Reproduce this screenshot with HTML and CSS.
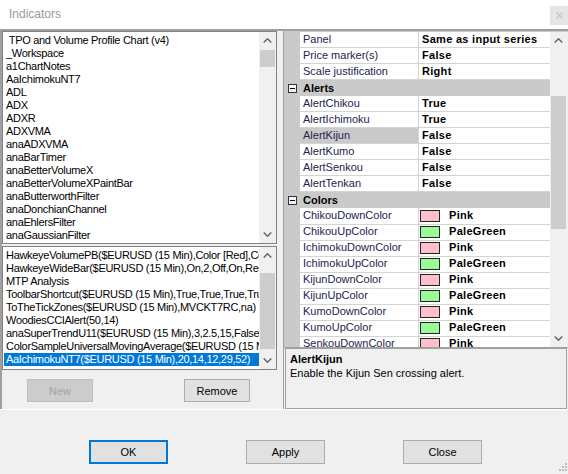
FILE: index.html
```html
<!DOCTYPE html>
<html>
<head>
<meta charset="utf-8">
<link rel="stylesheet" href="styles.css">
</head>
<body>
<div class="titlebar">
  <span class="title">Indicators</span>
  <span class="close"><svg width="7" height="7" viewBox="0 0 7 7"><path d="M0.5 0.5L6.5 6.5M6.5 0.5L0.5 6.5" stroke="#c4c4c4" stroke-width="1.2" fill="none"/></svg></span>
</div>
<div class="main">
  <div class="left">
    <div class="list list-top">
      <div class="items">
        <div class="item">&nbsp;TPO and Volume Profile Chart (v4)</div>
        <div class="item">_Workspace</div>
        <div class="item">a1ChartNotes</div>
        <div class="item">AaIchimokuNT7</div>
        <div class="item">ADL</div>
        <div class="item">ADX</div>
        <div class="item">ADXR</div>
        <div class="item">ADXVMA</div>
        <div class="item">anaADXVMA</div>
        <div class="item">anaBarTimer</div>
        <div class="item">anaBetterVolumeX</div>
        <div class="item">anaBetterVolumeXPaintBar</div>
        <div class="item">anaButterworthFilter</div>
        <div class="item">anaDonchianChannel</div>
        <div class="item">anaEhlersFilter</div>
        <div class="item">anaGaussianFilter</div>
      </div>
      <div class="vscroll">
        <div class="arrow"><svg width="9" height="5" viewBox="0 0 9 5"><polyline points="0.7,4.5 4.5,0.8 8.3,4.5" stroke="#606060" stroke-width="1.4" fill="none"/></svg></div>
        <div class="track"><div class="thumb thumb-top"></div></div>
        <div class="arrow"><svg width="9" height="5" viewBox="0 0 9 5"><polyline points="0.7,0.5 4.5,4.2 8.3,0.5" stroke="#606060" stroke-width="1.4" fill="none"/></svg></div>
      </div>
    </div>
    <div class="list list-bottom">
      <div class="items">
        <div class="item">HawkeyeVolumePB($EURUSD (15 Min),Color [Red],Color [Lime])</div>
        <div class="item">HawkeyeWideBar($EURUSD (15 Min),On,2,Off,On,Red)</div>
        <div class="item">MTP Analysis</div>
        <div class="item">ToolbarShortcut($EURUSD (15 Min),True,True,True,True)</div>
        <div class="item">ToTheTickZones($EURUSD (15 Min),MVCKT7RC,na)</div>
        <div class="item">WoodiesCCIAlert(50,14)</div>
        <div class="item">anaSuperTrendU11($EURUSD (15 Min),3,2.5,15,False)</div>
        <div class="item">ColorSampleUniversalMovingAverage($EURUSD (15 Min))</div>
        <div class="item sel">AaIchimokuNT7($EURUSD (15 Min),20,14,12,29,52)</div>
      </div>
      <div class="vscroll">
        <div class="arrow"><svg width="9" height="5" viewBox="0 0 9 5"><polyline points="0.7,4.5 4.5,0.8 8.3,4.5" stroke="#606060" stroke-width="1.4" fill="none"/></svg></div>
        <div class="track"><div class="thumb thumb-bottom"></div></div>
        <div class="arrow"><svg width="9" height="5" viewBox="0 0 9 5"><polyline points="0.7,0.5 4.5,4.2 8.3,0.5" stroke="#606060" stroke-width="1.4" fill="none"/></svg></div>
      </div>
    </div>
    <div class="list-buttons">
      <button class="btn disabled">New</button>
      <button class="btn remove">Remove</button>
    </div>
  </div>
  <div class="right">
    <div class="grid">
      <div class="rows">
        <div class="row"><div class="gutter"></div><div class="name">Panel</div><div class="value">Same as input series</div></div>
        <div class="row"><div class="gutter"></div><div class="name">Price marker(s)</div><div class="value">False</div></div>
        <div class="row"><div class="gutter"></div><div class="name">Scale justification</div><div class="value">Right</div></div>
        <div class="row cat"><div class="gutter"><span class="minus"></span></div><div class="label">Alerts</div></div>
        <div class="row"><div class="gutter"></div><div class="name">AlertChikou</div><div class="value">True</div></div>
        <div class="row"><div class="gutter"></div><div class="name">AlertIchimoku</div><div class="value">True</div></div>
        <div class="row selected"><div class="gutter"></div><div class="name">AlertKijun</div><div class="value">False</div></div>
        <div class="row"><div class="gutter"></div><div class="name">AlertKumo</div><div class="value">False</div></div>
        <div class="row"><div class="gutter"></div><div class="name">AlertSenkou</div><div class="value">False</div></div>
        <div class="row"><div class="gutter"></div><div class="name">AlertTenkan</div><div class="value">False</div></div>
        <div class="row cat"><div class="gutter"><span class="minus"></span></div><div class="label">Colors</div></div>
        <div class="row"><div class="gutter"></div><div class="name">ChikouDownColor</div><div class="value color"><span class="swatch pink"></span>Pink</div></div>
        <div class="row"><div class="gutter"></div><div class="name">ChikouUpColor</div><div class="value color"><span class="swatch green"></span>PaleGreen</div></div>
        <div class="row"><div class="gutter"></div><div class="name">IchimokuDownColor</div><div class="value color"><span class="swatch pink"></span>Pink</div></div>
        <div class="row"><div class="gutter"></div><div class="name">IchimokuUpColor</div><div class="value color"><span class="swatch green"></span>PaleGreen</div></div>
        <div class="row"><div class="gutter"></div><div class="name">KijunDownColor</div><div class="value color"><span class="swatch pink"></span>Pink</div></div>
        <div class="row"><div class="gutter"></div><div class="name">KijunUpColor</div><div class="value color"><span class="swatch green"></span>PaleGreen</div></div>
        <div class="row"><div class="gutter"></div><div class="name">KumoDownColor</div><div class="value color"><span class="swatch pink"></span>Pink</div></div>
        <div class="row"><div class="gutter"></div><div class="name">KumoUpColor</div><div class="value color"><span class="swatch green"></span>PaleGreen</div></div>
        <div class="row"><div class="gutter"></div><div class="name">SenkouDownColor</div><div class="value color"><span class="swatch pink"></span>Pink</div></div>
      </div>
      <div class="vscroll grid-scroll">
        <div class="arrow"><svg width="9" height="5" viewBox="0 0 9 5"><polyline points="0.7,4.5 4.5,0.8 8.3,4.5" stroke="#606060" stroke-width="1.4" fill="none"/></svg></div>
        <div class="track"><div class="thumb thumb-grid"></div></div>
        <div class="arrow"><svg width="9" height="5" viewBox="0 0 9 5"><polyline points="0.7,0.5 4.5,4.2 8.3,0.5" stroke="#606060" stroke-width="1.4" fill="none"/></svg></div>
      </div>
    </div>
    <div class="desc">
      <div class="desc-title">AlertKijun</div>
      <div class="desc-text">Enable the Kijun Sen crossing alert.</div>
    </div>
  </div>
</div>
<div class="footer">
  <button class="fbtn default">OK</button>
  <button class="fbtn">Apply</button>
  <button class="fbtn">Close</button>
</div>
<svg class="grip" width="10" height="10" viewBox="0 0 10 10">
  <rect x="8" y="0" width="2" height="2" fill="#bcbcbc"/>
  <rect x="5" y="3" width="2" height="2" fill="#bcbcbc"/>
  <rect x="8" y="3" width="2" height="2" fill="#bcbcbc"/>
  <rect x="2" y="6" width="2" height="2" fill="#bcbcbc"/>
  <rect x="5" y="6" width="2" height="2" fill="#bcbcbc"/>
  <rect x="8" y="6" width="2" height="2" fill="#bcbcbc"/>
</svg>
</body>
</html>
```
FILE: styles.css
```css
* { box-sizing: border-box; }
html, body { margin: 0; padding: 0; }
body {
  width: 568px;
  height: 474px;
  overflow: hidden;
  position: relative;
  background: #f0f0f0;
  font-family: "Liberation Sans", Arial, sans-serif;
  font-size: 11px;
  color: #000;
}

.titlebar {
  height: 29px;
  background: #fff;
  display: flex;
  justify-content: space-between;
  align-items: flex-start;
}
.title {
  padding-left: 9px;
  line-height: 28px;
  font-size: 12px;
  color: #9a9a9a;
}
.close {
  margin-top: 6px;
  width: 18px;
  height: 19px;
  background: #e5e5e5;
  display: flex;
  align-items: center;
  justify-content: center;
}

.main {
  display: flex;
  height: 381px;
  border-top: 2px solid #a0a0a0;
  border-bottom: 1px solid #fff;
}

.left {
  width: 280px;
  border-left: 2px solid #a0a0a0;
  display: flex;
  flex-direction: column;
}
.list {
  width: 275px;
  background: #fff;
  border: 1px solid #828282;
  display: flex;
}
.list-top { height: 213px; }
.list-bottom { height: 124px; margin-top: 2px; }
.items {
  flex: 1;
  min-width: 0;
  padding: 2px 0 0 1px;
  overflow: hidden;
}
.item {
  height: 13px;
  line-height: 13px;
  padding-left: 2px;
  white-space: nowrap;
  overflow: hidden;
  letter-spacing: -0.3px;
}
.item.sel { background: #0078d7; color: #fff; }

.vscroll {
  width: 17px;
  flex: none;
  background: #f0f0f0;
  display: flex;
  flex-direction: column;
}
.arrow {
  height: 17px;
  display: flex;
  align-items: center;
  justify-content: center;
}
.track { flex: 1; }
.thumb { background: #cdcdcd; margin: 0 1px; }
.thumb-top { margin-top: 1px; height: 17px; }
.thumb-bottom { margin-top: 9px; height: 76px; }
.thumb-grid { margin-top: 47px; height: 133px; }

.list-buttons {
  display: flex;
  margin-top: 9px;
  padding-left: 25px;
}
.btn {
  width: 66px;
  height: 23px;
  padding: 0;
  background: #e1e1e1;
  border: 1px solid #adadad;
  font-family: "Liberation Sans", Arial, sans-serif;
  font-size: 11px;
  color: #000;
}
.btn.disabled { background: #cccccc; border-color: #bfbfbf; color: #a3a3a3; }
.btn.remove { margin-left: 91px; }

.right {
  margin-left: 3px;
  width: 285px;
  border-left: 1px solid #a0a0a0;
  display: flex;
  flex-direction: column;
}
.grid {
  height: 317px;
  display: flex;
  background: #fff;
  border-top: 1px solid #cacaca;
  border-bottom: 1px solid #a0a0a0;
}
.rows { width: 266px; overflow: hidden; }
.row {
  display: grid;
  grid-template-columns: 16px 119px 131px;
  height: 16px;
}
.gutter { background: #cacaca; position: relative; }
.name {
  padding-left: 3px;
  line-height: 15px;
  color: #24244a;
  white-space: nowrap;
  overflow: hidden;
  border-right: 1px solid #d4d4d4;
  border-bottom: 1px solid #d4d4d4;
}
.value {
  padding-left: 3px;
  line-height: 15px;
  font-weight: bold;
  letter-spacing: 0.3px;
  white-space: nowrap;
  border-bottom: 1px solid #d4d4d4;
}
.value.color {
  padding-left: 1px;
  display: flex;
  align-items: center;
  padding-bottom: 1px;
}
.swatch {
  width: 20px;
  height: 12px;
  border: 1px solid #222;
  margin-right: 9px;
}
.swatch.pink { background: #ffc0cb; }
.swatch.green { background: #98fb98; }
.row.selected .name { background: #cacaca; }
.row.cat { background: #cacaca; }
.row.cat .label {
  grid-column: 2 / 4;
  padding-left: 3px;
  line-height: 16px;
  font-weight: bold;
}
.minus {
  position: absolute;
  left: 4px;
  top: 4px;
  width: 9px;
  height: 9px;
  border: 1px solid #333;
  background: #f4f4f4;
}
.minus::after {
  content: "";
  position: absolute;
  left: 1px;
  top: 3px;
  width: 5px;
  height: 1px;
  background: #000;
}
.grid-scroll { width: 18px; border-right: 1px solid #f0f0f0; }

.desc {
  margin-left: 1px;
  width: 282px;
  height: 61px;
  border: 1px solid #a0a0a0;
  padding: 3px 0 0 4px;
  line-height: 14px;
}
.desc-title { font-weight: bold; }

.footer {
  display: flex;
  padding: 30px 0 0 89px;
  gap: 78px;
}
.fbtn {
  width: 79px;
  height: 24px;
  padding: 0;
  background: #e1e1e1;
  border: 1px solid #adadad;
  font-family: "Liberation Sans", Arial, sans-serif;
  font-size: 11px;
  color: #000;
}
.fbtn.default { border: 2px solid #0078d7; }

.grip {
  position: absolute;
  right: 1px;
  bottom: 1px;
}
```
